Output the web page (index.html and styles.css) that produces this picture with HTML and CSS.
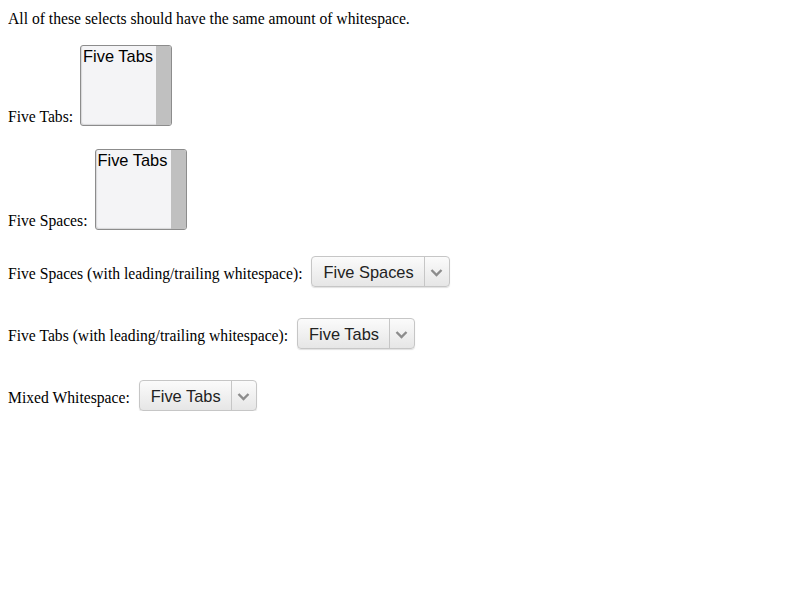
FILE: index.html
```html
<!DOCTYPE html>
<html>
<head>
<meta charset="utf-8">
<link rel="stylesheet" href="styles.css">
</head>
<body>
<div class="intro">All of these selects should have the same amount of whitespace.</div>

<div class="row row-list first">
  <span class="label">Five Tabs:</span>
  <div class="listbox"><div class="list-body"><span class="option">Five Tabs</span></div><div class="scrollbar"></div></div>
</div>

<div class="row row-list second">
  <span class="label">Five Spaces:</span>
  <div class="listbox"><div class="list-body"><span class="option">Five Tabs</span></div><div class="scrollbar"></div></div>
</div>

<div class="row row-drop d1">
  <span class="label">Five Spaces (with leading/trailing whitespace):</span>
  <div class="dropdown"><span class="value">Five Spaces</span><span class="arrow"><svg width="13" height="9" viewBox="0 0 13 9"><path d="M1.5 2 L6.5 7 L11.5 2" fill="none" stroke="#8c8c8c" stroke-width="2.4"/></svg></span></div>
</div>

<div class="row row-drop d2">
  <span class="label">Five Tabs (with leading/trailing whitespace):</span>
  <div class="dropdown"><span class="value">Five Tabs</span><span class="arrow"><svg width="13" height="9" viewBox="0 0 13 9"><path d="M1.5 2 L6.5 7 L11.5 2" fill="none" stroke="#8c8c8c" stroke-width="2.4"/></svg></span></div>
</div>

<div class="row row-drop d3">
  <span class="label">Mixed Whitespace:</span>
  <div class="dropdown"><span class="value">Five Tabs</span><span class="arrow"><svg width="13" height="9" viewBox="0 0 13 9"><path d="M1.5 2 L6.5 7 L11.5 2" fill="none" stroke="#8c8c8c" stroke-width="2.4"/></svg></span></div>
</div>
</body>
</html>
```

FILE: styles.css
```css
body {
  margin: 8px;
  font-family: "Liberation Serif", serif;
  font-size: 15.65px;
  color: #000;
  background: #fff;
}
.intro {
  line-height: 18px;
  padding-top: 2px;
}
.row {
  display: flex;
}
.label {
  line-height: 18px;
}
.row-list {
  align-items: flex-end;
}
.row-list .label {
  margin-right: 7px;
}
.first { margin-top: 17px; }
.second { margin-top: 23px; }
.listbox {
  width: 92px;
  height: 81px;
  box-sizing: border-box;
  border: 1px solid #8c8c8c;
  border-radius: 3px;
  background: #f4f4f6;
  display: flex;
  overflow: hidden;
  box-shadow: inset 1px -1px 1px rgba(0,0,0,0.12);
}
.list-body {
  flex: 1;
  padding: 1px 0 0 2px;
}
.option {
  font-family: "Liberation Sans", Arial, sans-serif;
  font-size: 16.4px;
  line-height: 19px;
  color: #000;
}
.scrollbar {
  width: 15px;
  background: #c0c0c0;
}
.row-drop {
  align-items: center;
}
.row-drop .label {
  margin-right: 9px;
  padding-top: 4px;
}
.d1 { margin-top: 26px; }
.d2 { margin-top: 31px; }
.d3 { margin-top: 31px; }
.dropdown {
  display: flex;
  align-items: stretch;
  height: 31px;
  box-sizing: border-box;
  border: 1px solid #c6c6c6;
  border-radius: 4px;
  background: linear-gradient(#fbfbfb, #e6e6e6);
  box-shadow: 0 1px 1px rgba(0,0,0,0.12);
  font-family: "Liberation Sans", Arial, sans-serif;
  font-size: 16.4px;
  color: #222;
}
.value {
  display: flex;
  align-items: center;
  padding: 2px 10px 0 11px;
}
.arrow {
  width: 24px;
  border-left: 1px solid #c6c6c6;
  display: flex;
  align-items: center;
  justify-content: center;
  padding-top: 1px;
}
```
